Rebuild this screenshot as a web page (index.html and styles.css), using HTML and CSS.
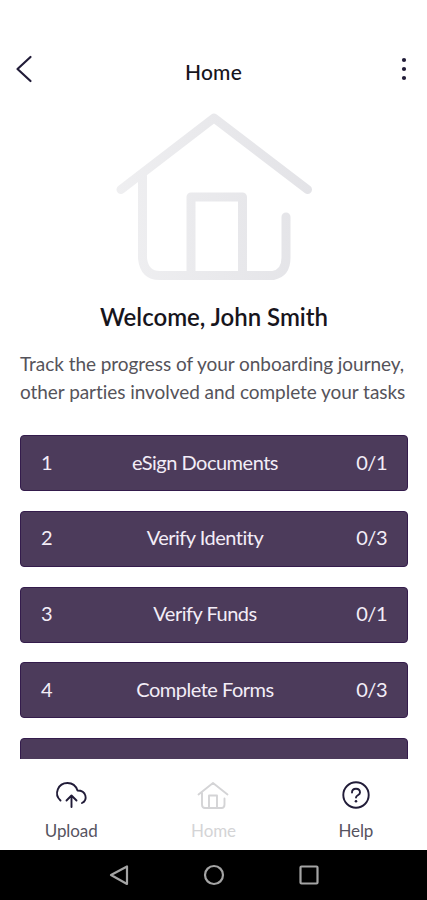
FILE: index.html
```html
<!DOCTYPE html>
<html lang="en">
<head>
<meta charset="utf-8">
<title>Home</title>
<link rel="stylesheet" href="styles.css">
</head>
<body>
<div class="screen">
  <header class="topbar">
    <svg class="back" viewBox="0 0 18 28"><path d="M15.500 2 2.500 14l13 12"/></svg>
    <h1 class="title">Home</h1>
    <svg class="more" viewBox="0 0 6 24"><circle cx="3" cy="3" r="2.100"/><circle cx="3" cy="12" r="2.100"/><circle cx="3" cy="21" r="2.100"/></svg>
  </header>
  <main class="content">
    <svg class="house" viewBox="0 0 200 172">
      <defs>
        <linearGradient id="fade" gradientUnits="userSpaceOnUse" x1="0" y1="90" x2="200" y2="70"><stop offset="0" stop-color="#efeff1"/><stop offset="1" stop-color="#e3e3e7"/></linearGradient>
      </defs>
      <g class="house-lines">
        <path d="M8 79.500 101 8 194.500 79.500"/>
        <path d="M29.500 66V148.500Q31.500 165.500 46.500 165.500H160Q173 163 173 147.500V107"/>
        <path d="M78 165V87H129.500V165"/>
      </g>
    </svg>
    <h2 class="welcome">Welcome, John Smith</h2>
    <p class="intro">Track the progress of your onboarding journey,<br>other parties involved and complete your tasks</p>
    <div class="tasks">
      <div class="task"><span>1</span><span class="name">eSign Documents</span><span class="count">0/1</span></div>
      <div class="task"><span>2</span><span class="name">Verify Identity</span><span class="count">0/3</span></div>
      <div class="task"><span>3</span><span class="name">Verify Funds</span><span class="count">0/1</span></div>
      <div class="task"><span>4</span><span class="name">Complete Forms</span><span class="count">0/3</span></div>
      <div class="task"><span>5</span><span class="name">Sign Terms</span><span class="count">0/1</span></div>
    </div>
  </main>
  <nav class="tabs">
    <a class="tab"><svg class="icon" viewBox="0 0 34 30"><path d="M6.500 20.500C-.5 14 4 3 13.500 3 19 3 22 6 23.500 10.500 32.500 10.500 34 20 28 23M17.500 27V16M12.500 20.500 17.500 15.500 22.500 20.500"/></svg><span>Upload</span></a>
    <a class="tab active"><svg class="icon" viewBox="0 0 34 30"><path d="M2.500 14.500 17 3 31.500 14.500M6 13V24.500Q6 28 9 28H25.500Q28.500 28 28.500 24.500V18.500M13 28V15.500H21V28"/></svg><span>Home</span></a>
    <a class="tab"><svg class="icon" viewBox="0 0 34 30"><circle cx="17" cy="15" r="12.700"/><path d="M13 12.500C13 7.500 21 7.500 21 12.500 21 15.500 17 15 17 17.500"/><circle class="dot" cx="17" cy="21.300" r="1.300"/></svg><span>Help</span></a>
  </nav>
  <footer class="system">
    <svg viewBox="0 0 22 22"><path d="M19 2.500V20L3 11Z"/></svg>
    <svg viewBox="0 0 22 22"><circle cx="11" cy="11" r="9"/></svg>
    <svg viewBox="0 0 22 22"><rect x="2.500" y="2.500" width="17" height="17" rx="1"/></svg>
  </footer>
</div>
</body>
</html>
```
FILE: styles.css
```css
* { box-sizing: border-box; }
body { margin: 0; background: #fff; font-family: Lato, "Liberation Sans", sans-serif; font-variant-ligatures: none; color: #17151c; }
svg { display: block; fill: none; stroke-linecap: round; stroke-linejoin: round; }
.screen { width: 427px; height: 900px; display: flex; flex-direction: column; overflow: hidden; }
.topbar { height: 110px; padding: 55px 20px 0 15px; display: grid; grid-template-columns: 18px 1fr 6px; align-items: start; flex: none; }
.back { width: 18px; height: 28px; stroke: #211c38; stroke-width: 2.2; }
.title { margin: 5px 7px 0 0; font-size: 21px; line-height: 24px; font-weight: 500; letter-spacing: .2px; text-align: center; }
.more { width: 6px; height: 24px; margin-top: 2px; fill: #211c38; }
.content { height: 649px; flex: none; overflow: hidden; padding: 0 19px 0 20px; }
.house { width: 200px; height: 172px; margin: 0 0 0 93px; }
.house-lines { stroke: url(#fade); stroke-width: 9; }
.welcome { margin: 21px 0 0; font-size: 24px; line-height: 28px; font-weight: 600; text-align: center; white-space: nowrap; }
.intro { margin: 19px 0 0; font-size: 19px; line-height: 28px; letter-spacing: -.05px; color: #55535a; white-space: nowrap; }
.tasks { margin-top: 29px; display: grid; gap: 19.8px; }
.task { height: 56px; padding: 0 20px 3px; border-radius: 4px; border: 1px solid #341c4c; background: #4c3b5b; color: #f3edf7; display: grid; grid-template-columns: 30px 1fr 40px; align-items: center; font-size: 20px; line-height: 24px; letter-spacing: -.5px; }
.name { text-align: center; margin-left: -8px; }
.count { text-align: right; }
.tabs { height: 91px; flex: none; padding-top: 21px; display: grid; grid-template-columns: repeat(3, 1fr); }
.tab { display: flex; flex-direction: column; align-items: center; gap: 10px; font-size: 17px; line-height: 22px; color: #56535f; }
.icon { width: 34px; height: 30px; stroke: #211c38; stroke-width: 1.9; }
.dot { fill: #211c38; stroke: none; }
.tab span { letter-spacing: -.1px; }
.active { color: #d4d4d6; }
.active .icon { stroke: #d4d4d6; }
.system { height: 50px; flex: none; background: #000; display: flex; justify-content: center; align-items: center; gap: 73px; }
.system svg { width: 22px; height: 22px; stroke: #a4a4a4; stroke-width: 2.2; }
```
